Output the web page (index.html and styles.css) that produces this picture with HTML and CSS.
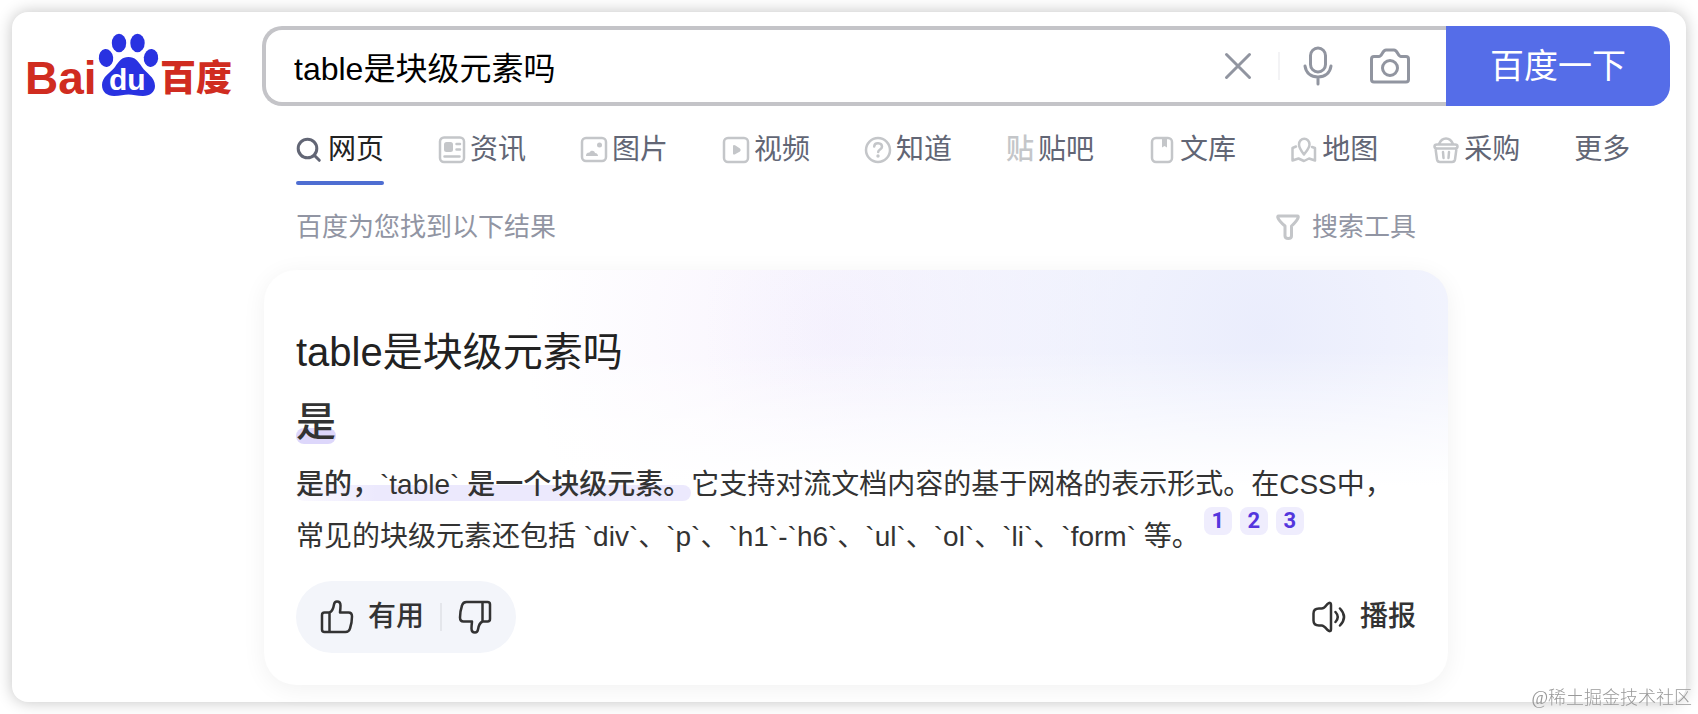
FILE: index.html
```html
<!DOCTYPE html>
<html lang="zh-CN">
<head>
    <meta charset="UTF-8">
    <meta name="viewport" content="width=device-width, initial-scale=1.0">
    <title>table是块级元素吗_百度搜索</title>
    <link rel="stylesheet" href="styles.css">
</head>
<body>
    <div class="window">
        <header class="header">
            <a href="#" class="logo" aria-label="百度">
                <svg width="208" height="80" viewBox="-4 0 208 80">
                    <text class="logo-latin" x="-3" y="68">Bai</text>
                    <g fill="#2932e1">
                        <ellipse cx="78" cy="32" rx="7.2" ry="9" transform="rotate(-6 78 32)"/>
                        <ellipse cx="91" cy="17" rx="7.2" ry="9.3"/>
                        <ellipse cx="109.5" cy="17" rx="7.2" ry="9.3"/>
                        <ellipse cx="123" cy="32" rx="7.2" ry="9" transform="rotate(6 123 32)"/>
                        <path d="M100.500 31C107 31 110 35 114 41C118 47 127 51 127 60C127 66 122 70 115 70C109 70 105 68.500 100.500 68.500C96 68.500 92 70 86 70C79 70 74 66 74 59C74 51 82 47 87 41C91 35 94 31 100.500 31Z"/>
                    </g>
                    <text class="logo-du" x="81" y="64">du</text>
                    <text class="logo-cjk" x="132" y="65">百度</text>
                </svg>
            </a>
            <form class="search" onsubmit="return false">
                <div class="search-box">
                    <input type="text" id="kw" class="search-input" value="table是块级元素吗" aria-label="搜索">
                    <button type="button" class="icon-btn clear-btn" aria-label="清空" onclick="clearInput()">
                        <svg width="28" height="28" viewBox="0 0 28 28"><path d="M2.500 2.500l23 23M25.500 2.500l-23 23"/></svg>
                    </button>
                    <span class="search-divider"></span>
                    <button type="button" class="icon-btn mic-btn" aria-label="语音">
                        <svg width="30" height="40" viewBox="0 0 30 40"><rect x="7.500" y="2" width="15" height="24" rx="7.500"/><path d="M2 20c1 7 6 11 13 11s12-4 13-11M15 31v7"/></svg>
                    </button>
                    <button type="button" class="icon-btn" aria-label="图片">
                        <svg width="40" height="40" viewBox="0 0 40 40"><path d="M4 10.500h5c3 0 3.500-6.500 7-6.500h8c3.500 0 4 6.500 7 6.500h5a2.500 2.500 0 0 1 2.500 2.500v20.500a2.500 2.500 0 0 1-2.500 2.500H4a2.500 2.500 0 0 1-2.500-2.500V13A2.500 2.500 0 0 1 4 10.500z"/><circle cx="20" cy="22" r="7.500"/></svg>
                    </button>
                </div>
                <button type="submit" class="search-btn">百度一下</button>
            </form>
        </header>

        <nav class="tabs">
            <a href="#" class="tab active">
                <svg class="tab-icon" viewBox="0 0 28 28"><circle cx="11.500" cy="12.500" r="9.300"/><path d="M18.500 19.500l4.800 4.800"/></svg>网页</a>
            <a href="#" class="tab">
                <svg class="tab-icon" viewBox="0 0 28 28"><rect x="2" y="1.500" width="24" height="24.500" rx="4"/><rect class="solid" x="6" y="6" width="9" height="10" rx="2.500"/><path d="M18.500 8h3.500M18.500 13.500h3.500M6.500 20.500h15"/></svg>资讯</a>
            <a href="#" class="tab">
                <svg class="tab-icon" viewBox="0 0 28 28"><rect x="2" y="2" width="24" height="23" rx="4"/><circle class="solid" cx="19.500" cy="9" r="2.500"/><path class="solid" d="M6 20c0-3 2-3.500 3.500-3.500C10.500 14 14.500 14 15 17c2 0 3 1.500 3 3z"/></svg>图片</a>
            <a href="#" class="tab">
                <svg class="tab-icon" viewBox="0 0 28 28"><rect x="2" y="2" width="24" height="24" rx="4"/><path class="solid" d="M11 9.500q1-1 2.500 0l4.500 3q1.500 1.500 0 3l-4.500 2.500q-1.500 1-2.500 0z"/></svg>视频</a>
            <a href="#" class="tab">
                <svg class="tab-icon" viewBox="0 0 28 28"><circle cx="14" cy="14" r="12"/><path d="M10.200 10.500c.300-4.500 7.800-4 7.800.300 0 2.700-3.800 2.700-3.800 5.200"/><circle class="solid" cx="14" cy="20" r="1.700"/></svg>知道</a>
            <a href="#" class="tab"><span class="tab-glyph" aria-hidden="true">贴</span>贴吧</a>
            <a href="#" class="tab">
                <svg class="tab-icon" viewBox="0 0 28 28"><rect x="4" y="2" width="20" height="24" rx="4"/><path class="solid" d="M14 2h5v9.500l-2.500-1.500-2.500 1.500z"/></svg>文库</a>
            <a href="#" class="tab">
                <svg class="tab-icon" viewBox="0 0 28 28"><path d="M14 18.500c-3-4-5-6.500-5-10a5 5.500 0 0 1 10.500 0c0 3.500-2.500 6-5.500 10zM6 10.500l-3.500 1.500v12.500l6-2 5.500 2.500 5-2.500 6 2V12l-3-1"/></svg>地图</a>
            <a href="#" class="tab">
                <svg class="tab-icon" viewBox="0 0 28 28"><path d="M5 8.500h18q2.500 0 2.500 2t-2.500 2H5q-2.500 0-2.500-2t2.500-2zM3.500 12.500l1.500 11q.500 2.500 3 2.500h12q2.500 0 3-2.500l1.500-11M7 8c1.500-3.500 4-5.500 7-5.500s5.500 2 7 5.500M11 16l.500 6M17 16l-.500 6"/></svg>采购</a>
            <a href="#" class="tab">更多</a>
        </nav>

        <div class="result-bar">
            <span>百度为您找到以下结果</span>
            <button type="button" class="tools-btn">
                <svg width="24" height="26" viewBox="0 0 24 26"><path d="M2.500 2h19q1 0 .700 1.500Q21 7 15.500 12v10q0 2.500-3.200 2.500T9 22V12Q3 7 1.800 3.500 1.500 2 2.500 2z"/></svg>搜索工具
            </button>
        </div>

        <main class="card">
            <h1 class="card-title">table是块级元素吗</h1>
            <div class="answer"><strong class="mark mark-deep">是</strong></div>
            <p class="summary"><strong class="mark">是的，`table` 是一个块级元素。</strong>它支持对流文档内容的基于网格的表示形式。在CSS中，常见的块级元素还包括 `div`、`p`、`h1`-`h6`、`ul`、`ol`、`li`、`form` 等。<a href="#" class="ref">1</a><a href="#" class="ref">2</a><a href="#" class="ref">3</a></p>
            <div class="card-footer">
                <div class="feedback">
                    <button type="button" class="action-btn">
                        <svg width="34" height="34" viewBox="0 0 34 34"><path d="M9.500 12.500H4.500q-2.500 0-2.500 2.500v14.500q0 2.500 2.500 2.500h21q3.500 0 4.500-3.500 2-6 2-12 0-4-3.500-4h-8.500q.500-4.500.500-7 0-4-3.500-4-2.500 0-3 3-1 6.500-4.500 8zM9.500 12.500V32"/></svg>有用
                    </button>
                    <span class="feedback-divider"></span>
                    <button type="button" class="action-btn" aria-label="没用">
                        <svg width="34" height="34" viewBox="0 0 34 34"><path d="M24.500 21.500h5q2.500 0 2.500-2.500V4.500Q32 2 29.500 2h-21Q5 2 4 5.500q-2 6-2 12 0 4 3.500 4H14q-.500 4.500-.500 7 0 4 3.500 4 2.500 0 3-3 1-6.500 4.500-8zM24.500 21.500V2"/></svg>
                    </button>
                </div>
                <button type="button" class="action-btn">
                    <svg width="34" height="34" viewBox="1 0 34 34"><path d="M8 8.500h2.500Q13 8.500 16 4.500q4-3.500 4 .500v24q0 4-4 .500-3-4-5.500-4H8q-5.500 0-5.500-5v-7q0-5 5.500-5zM24.500 12q4.500 5 0 10M29 8.500q8 8.500 0 17"/></svg>播报
                </button>
            </div>
        </main>
    </div>
    <div class="watermark">@稀土掘金技术社区</div>

    <script>
        function clearInput() {
            const input = document.getElementById('kw');
            input.value = '';
            input.focus();
        }
    </script>
</body>
</html>
```
FILE: styles.css
```css
* {
    box-sizing: border-box;
}

body {
    margin: 0;
    padding: 12px;
    background-color: #fff;
    color: #333;
    font-family: "Liberation Sans", "Noto Sans CJK SC", sans-serif;
}

a {
    text-decoration: none;
}

button {
    padding: 0;
    border: none;
    background: none;
    font-family: inherit;
    line-height: 40px;
    cursor: pointer;
}

svg {
    display: block;
    flex: none;
    fill: none;
    stroke-linecap: round;
    stroke-linejoin: round;
}

.window {
    min-height: calc(100vh - 24px);
    padding: 14px 16px 12px 12px;
    border-radius: 16px;
    background-color: #fff;
    box-shadow: 0 0 16px rgba(0, 0, 0, 0.24);
}

/* Header */
.header {
    display: flex;
    gap: 30px;
}

.logo-latin,
.logo-cjk {
    fill: #d02c20;
    font-weight: 700;
}

.logo-latin {
    font-size: 46px;
}

.logo-du {
    fill: #fff;
    font-size: 30px;
    font-weight: 700;
}

.logo-cjk {
    font-family: "Noto Sans CJK SC", sans-serif;
    font-size: 36px;
    font-weight: 900;
}

.search {
    display: flex;
    flex: 1;
    height: 80px;
}

.search-box {
    display: flex;
    flex: 1;
    align-items: center;
    padding: 0 36px 0 28px;
    border: 4px solid #c4c4c8;
    border-right: none;
    border-radius: 20px 0 0 20px;
}

.search-input {
    flex: 1;
    min-width: 0;
    height: 64px;
    padding: 0;
    border: none;
    outline: none;
    color: #000;
    font-family: inherit;
    font-size: 32px;
}

.icon-btn svg {
    stroke: #9195a0;
    stroke-width: 3;
}

.search-divider {
    width: 2px;
    height: 28px;
    margin: 0 23px 0 26px;
    background-color: #f3f3f5;
}

.mic-btn {
    margin-right: 37px;
}

.search-btn {
    width: 224px;
    border-radius: 0 20px 20px 0;
    background-color: #556de8;
    color: #fff;
    font-size: 34px;
}

/* Tabs */
.tabs {
    display: flex;
    gap: 54px;
    margin-top: 24px;
    padding-left: 272px;
}

.tab {
    display: flex;
    position: relative;
    align-items: center;
    gap: 4px;
    height: 40px;
    margin-bottom: 15px;
    color: #626675;
    font-size: 28px;
    line-height: 40px;
    white-space: nowrap;
}

.tab-icon {
    width: 28px;
    height: 28px;
    stroke: #c4c6c9;
    stroke-width: 2.5;
}

.tab-icon .solid {
    fill: #c4c6c9;
    stroke: none;
}

.tab-glyph {
    color: #c4c6c9;
    font-weight: 500;
}

.tab.active {
    color: #222;
}

.tab.active .tab-icon {
    stroke: #626675;
    stroke-width: 3;
}

.tab.active::after {
    content: "";
    position: absolute;
    right: 0;
    bottom: -15px;
    left: 0;
    height: 4px;
    border-radius: 2px;
    background-color: #4e6ed2;
}

.result-bar {
    display: flex;
    justify-content: space-between;
    max-width: 1120px;
    height: 40px;
    margin: 22px 0 0 272px;
    color: #9195a3;
    font-size: 26px;
    line-height: 40px;
}

.tools-btn {
    display: flex;
    align-items: center;
    gap: 12px;
    color: inherit;
    font-size: 26px;
}

.tools-btn svg {
    stroke: #c4c6c9;
    stroke-width: 3;
}

/* Answer card */
.card {
    max-width: 1184px;
    margin: 23px 0 0 240px;
    padding: 54px 32px 32px;
    border-radius: 32px;
    background:
        linear-gradient(to bottom, rgba(255, 255, 255, 0) 80px, #fff 216px),
        radial-gradient(circle at 1000px 60px, rgba(232, 235, 252, 0.9), rgba(236, 242, 255, 0) 560px),
        radial-gradient(circle at 570px 60px, rgba(246, 240, 253, 0.8), rgba(245, 243, 255, 0) 310px),
        #fff;
    box-shadow: 0 4px 24px rgba(0, 0, 0, 0.06);
}

.card-title {
    margin: 0;
    color: #222;
    font-size: 40px;
    font-weight: 400;
    line-height: 56px;
}

.answer {
    margin-top: 14px;
    font-size: 40px;
    line-height: 56px;
}

.mark {
    display: inline-block;
    position: relative;
    isolation: isolate;
    font-weight: 500;
}

.mark::before {
    content: "";
    position: absolute;
    z-index: -1;
    right: 0;
    bottom: 10px;
    left: 0;
    height: 16px;
    border-radius: 8px;
    background: linear-gradient(to right, #fbfaff, #ece9fd 80px);
}

.mark-deep::before {
    bottom: 6px;
    background: #ddd7fb;
}

.summary {
    margin: 9px 0 0;
    font-size: 28px;
    line-height: 52px;
}

.ref {
    display: inline-block;
    width: 28px;
    height: 28px;
    margin: -4px 4px 0;
    border-radius: 8px;
    background-color: #efedfd;
    color: #5436dd;
    font-family: Roboto, sans-serif;
    font-size: 22px;
    font-weight: 700;
    line-height: 28px;
    text-align: center;
    vertical-align: top;
}

.card-footer {
    display: flex;
    align-items: center;
    justify-content: space-between;
    margin-top: 18px;
}

.feedback {
    display: flex;
    align-items: center;
    gap: 16px;
    height: 72px;
    padding: 0 24px;
    border-radius: 36px;
    background-color: #f3f5fa;
}

.feedback-divider {
    width: 2px;
    height: 28px;
    background-color: #e4e6eb;
}

.action-btn {
    display: flex;
    align-items: center;
    gap: 14px;
    color: #333;
    font-size: 28px;
    font-weight: 500;
}

.action-btn svg {
    stroke: #333;
    stroke-width: 2.5;
}

.watermark {
    position: fixed;
    right: 6px;
    bottom: 4px;
    color: #999;
    font-family: "Liberation Serif", "Noto Sans CJK SC", serif;
    font-size: 18px;
    font-weight: 300;
    line-height: 24px;
}
```
